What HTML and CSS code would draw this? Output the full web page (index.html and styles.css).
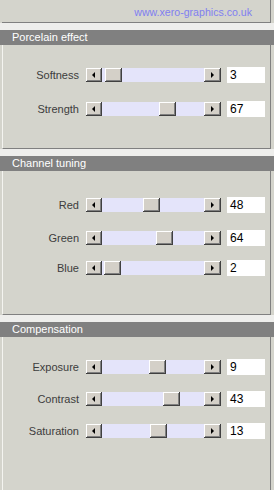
FILE: index.html
```html
<!DOCTYPE html>
<html lang="en">
<head>
    <meta charset="UTF-8">
    <meta name="viewport" content="width=device-width, initial-scale=1.0">
    <title>Porcelain</title>
    <link rel="stylesheet" href="styles.css">
</head>
<body>
    <div class="top">
        <span class="url">www.xero-graphics.co.uk</span>
    </div>

    <div class="strip"></div>
    <div class="panel-head">Porcelain effect</div>
    <div class="panel-body body-porcelain">
        <div class="row">
            <span class="label">Softness</span>
            <div class="scroll">
                <div class="btn btn-left"><i class="arrow-left"></i></div>
                <div class="track"><div class="thumb" style="left: 3px"></div></div>
                <div class="btn btn-right"><i class="arrow-right"></i></div>
            </div>
            <div class="val">3</div>
        </div>
        <div class="row">
            <span class="label">Strength</span>
            <div class="scroll">
                <div class="btn btn-left"><i class="arrow-left"></i></div>
                <div class="track"><div class="thumb" style="left: 57px"></div></div>
                <div class="btn btn-right"><i class="arrow-right"></i></div>
            </div>
            <div class="val">67</div>
        </div>
    </div>

    <div class="strip"></div>
    <div class="panel-head">Channel tuning</div>
    <div class="panel-body body-channel">
        <div class="row">
            <span class="label">Red</span>
            <div class="scroll">
                <div class="btn btn-left"><i class="arrow-left"></i></div>
                <div class="track"><div class="thumb" style="left: 41px"></div></div>
                <div class="btn btn-right"><i class="arrow-right"></i></div>
            </div>
            <div class="val">48</div>
        </div>
        <div class="row">
            <span class="label">Green</span>
            <div class="scroll">
                <div class="btn btn-left"><i class="arrow-left"></i></div>
                <div class="track"><div class="thumb" style="left: 54px"></div></div>
                <div class="btn btn-right"><i class="arrow-right"></i></div>
            </div>
            <div class="val">64</div>
        </div>
        <div class="row row-close">
            <span class="label">Blue</span>
            <div class="scroll">
                <div class="btn btn-left"><i class="arrow-left"></i></div>
                <div class="track"><div class="thumb" style="left: 2px"></div></div>
                <div class="btn btn-right"><i class="arrow-right"></i></div>
            </div>
            <div class="val">2</div>
        </div>
    </div>

    <div class="strip"></div>
    <div class="panel-head">Compensation</div>
    <div class="panel-body body-comp">
        <div class="row">
            <span class="label">Exposure</span>
            <div class="scroll">
                <div class="btn btn-left"><i class="arrow-left"></i></div>
                <div class="track"><div class="thumb" style="left: 47px"></div></div>
                <div class="btn btn-right"><i class="arrow-right"></i></div>
            </div>
            <div class="val">9</div>
        </div>
        <div class="row">
            <span class="label">Contrast</span>
            <div class="scroll">
                <div class="btn btn-left"><i class="arrow-left"></i></div>
                <div class="track"><div class="thumb" style="left: 61px"></div></div>
                <div class="btn btn-right"><i class="arrow-right"></i></div>
            </div>
            <div class="val">43</div>
        </div>
        <div class="row">
            <span class="label">Saturation</span>
            <div class="scroll">
                <div class="btn btn-left"><i class="arrow-left"></i></div>
                <div class="track"><div class="thumb" style="left: 48px"></div></div>
                <div class="btn btn-right"><i class="arrow-right"></i></div>
            </div>
            <div class="val">13</div>
        </div>
    </div>
</body>
</html>
```

FILE: styles.css
```css
* {
    margin: 0;
    padding: 0;
    box-sizing: border-box;
}

body {
    width: 274px;
    height: 490px;
    overflow: hidden;
    background: #d4d4cc;
    font-family: 'Liberation Sans', Arial, sans-serif;
    font-size: 11px;
    color: #3c3c3c;
}

/* Top bar with the link */
.top {
    height: 23px;
    margin: 0 3px 0 2px;
    border-right: 1px solid #808080;
    border-bottom: 1px solid #808080;
    display: flex;
    justify-content: flex-end;
    align-items: center;
    padding: 2px 18px 0 0;
}

.url {
    color: #8080f0;
    font-size: 10.6px;
}

.strip {
    height: 7px;
    background: #eeeeec;
}

/* Panels */
.panel-head {
    height: 15px;
    line-height: 15px;
    background: #808080;
    color: #fff;
    padding-left: 12px;
}

.panel-body {
    margin: 0 3px 0 2px;
    border-left: 1px solid #f4f4f0;
    border-right: 1px solid #808080;
    border-bottom: 1px solid #808080;
    display: flex;
    flex-direction: column;
}

.body-porcelain {
    height: 104px;
    padding-top: 22px;
    gap: 18px;
}

.body-channel {
    height: 144px;
    padding-top: 26px;
    gap: 17px;
}

.body-channel .row-close {
    margin-top: -3px;
}

.body-comp {
    height: 160px;
    padding-top: 22px;
    gap: 16px;
}

.row {
    height: 16px;
    display: flex;
    align-items: center;
}

.label {
    width: 76px;
    text-align: right;
    margin-right: 7px;
}

/* Scrollbar */
.scroll {
    width: 135px;
    height: 14px;
    display: flex;
}

.btn,
.thumb {
    background: #d4d0c8;
    box-shadow:
        inset -1px -1px #404040,
        inset 1px 1px #ffffff,
        inset -2px -2px #808080;
}

.btn {
    height: 14px;
    display: flex;
    justify-content: center;
    align-items: center;
}

.btn-left {
    width: 16px;
}

.btn-right {
    width: 17px;
}

.arrow-left {
    border-top: 3px solid transparent;
    border-bottom: 3px solid transparent;
    border-right: 3px solid #000;
    margin-left: -1px;
}

.arrow-right {
    border-top: 3px solid transparent;
    border-bottom: 3px solid transparent;
    border-left: 3px solid #000;
}

.track {
    flex: 1;
    position: relative;
    background: #e4e4fa;
}

.thumb {
    position: absolute;
    top: 0;
    width: 17px;
    height: 14px;
}

.val {
    width: 38px;
    height: 16px;
    margin-left: 6px;
    background: #fff;
    color: #000;
    font-size: 12px;
    line-height: 16px;
    padding-left: 3px;
}
```
